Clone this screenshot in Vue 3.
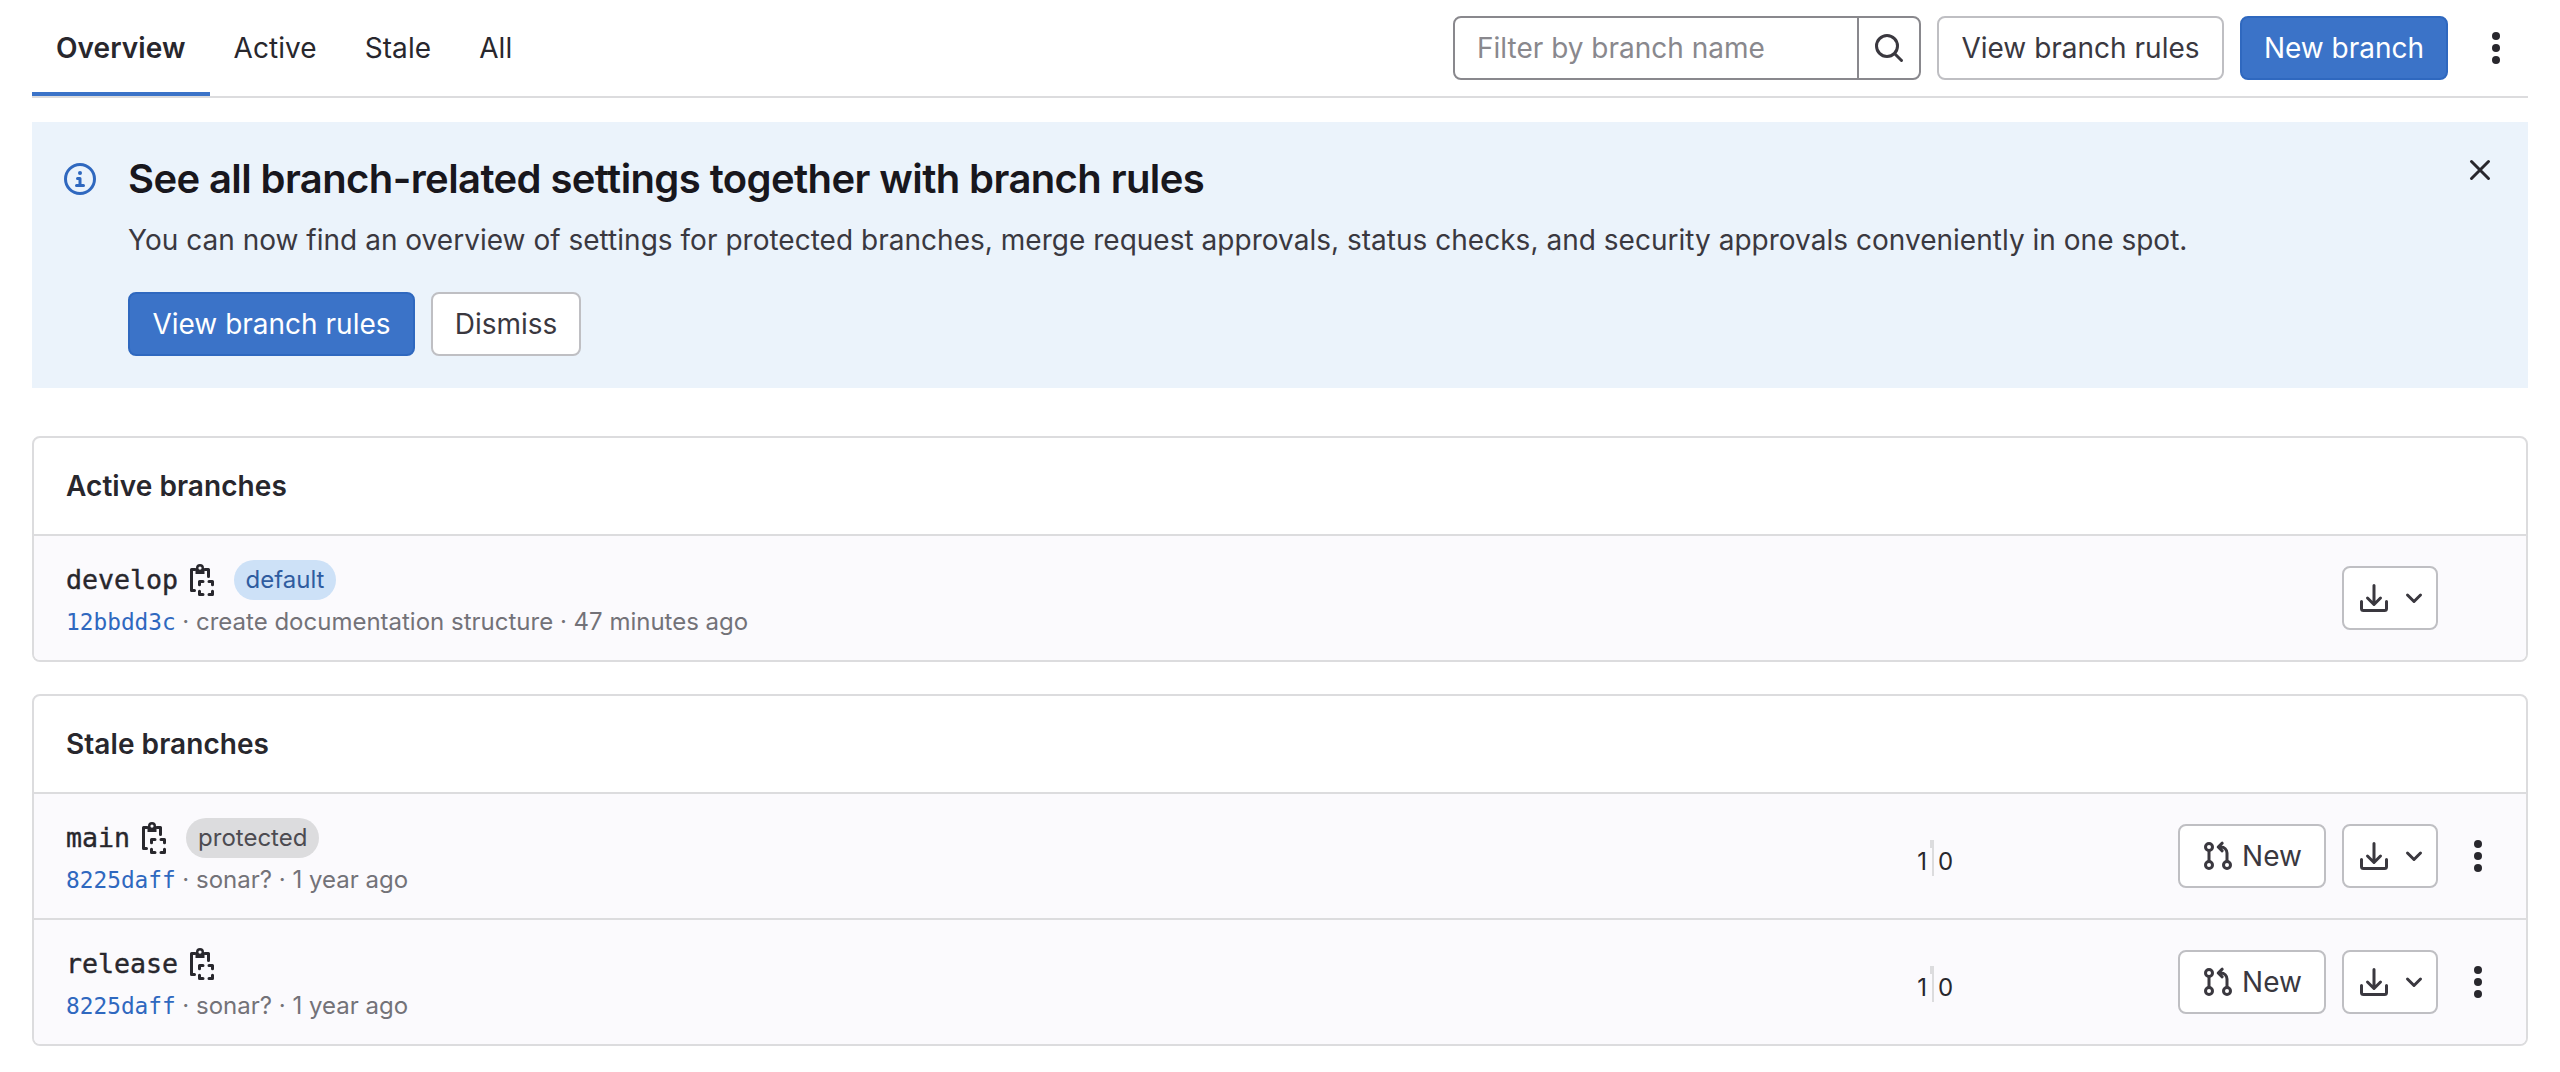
<script setup>
const tabs = ['Overview', 'Active', 'Stale', 'All']
const sections = [
  {
    title: 'Active branches',
    branches: [
      { name: 'develop', badge: 'default', kind: 'info', sha: '12bbdd3c', message: 'create documentation structure', time: '47 minutes ago', own: true }
    ]
  },
  {
    title: 'Stale branches',
    branches: [
      { name: 'main', badge: 'protected', kind: 'muted', sha: '8225daff', message: 'sonar?', time: '1 year ago', behind: 1, ahead: 0 },
      { name: 'release', sha: '8225daff', message: 'sonar?', time: '1 year ago', behind: 1, ahead: 0 }
    ]
  }
]
</script>

<template>
  <main class="page">
    <header class="toolbar">
      <nav class="tabs">
        <a v-for="(tab, i) in tabs" :key="tab" class="tab" :class="{ active: i === 0 }"><span>{{ tab }}</span></a>
      </nav>
      <div class="controls">
        <div class="search">
          <div class="search-text"><span>Filter by branch name</span></div>
          <div class="search-button">
            <svg class="icon" viewBox="0 0 16 16"><circle cx="7" cy="7" r="5.25" /><path d="M11 11l3.25 3.25" /></svg>
          </div>
        </div>
        <button class="btn rules">View branch rules</button>
        <button class="btn primary new-branch">New branch</button>
        <svg class="icon dots" viewBox="0 0 16 16"><circle cx="8" cy="2" r="2" /><circle cx="8" cy="8" r="2" /><circle cx="8" cy="14" r="2" /></svg>
      </div>
    </header>

    <section class="banner">
      <svg class="icon info-icon" viewBox="0 0 16 16"><circle cx="8" cy="8" r="7.25" /><path d="M6.75 7.75H8V11.25M6.25 11.25H9.75" /><circle class="fill" cx="8" cy="5" r="1" /></svg>
      <div class="banner-body">
        <h2>See all branch-related settings together with branch rules</h2>
        <p>You can now find an overview of settings for protected branches, merge request approvals, status checks, and security approvals conveniently in one spot.</p>
        <div class="banner-actions">
          <button class="btn primary rules">View branch rules</button>
          <button class="btn dismiss">Dismiss</button>
        </div>
      </div>
      <svg class="icon close" viewBox="0 0 16 16"><path d="M3.75 3.75l8.5 8.5M12.25 3.75l-8.5 8.5" /></svg>
    </section>

    <section v-for="section in sections" :key="section.title" class="card">
      <h3>{{ section.title }}</h3>
      <div v-for="b in section.branches" :key="b.name" class="row">
        <div class="details">
          <div class="name-line">
            <span class="name">{{ b.name }}</span>
            <svg class="icon copy" viewBox="0 0 16 16">
              <path d="M4.5 2.75H2.75v10.5H4.25M9.5 2.75h1.75V6.25" />
              <path class="fill" fill-rule="evenodd" d="M4.75 2H5a2 2 0 0 1 4 0h.25v3h-4.5zM7 1.25a.8.8 0 1 0 0 1.6.8.8 0 0 0 0-1.6z" />
              <path d="M6.75 10.4V8.75H8.5M11.5 8.75h1.75v1.65M13.25 13.6v1.65H11.5M8.5 15.25H6.75V13.6" />
            </svg>
            <span v-if="b.badge" class="badge" :class="b.kind">{{ b.badge }}</span>
          </div>
          <div class="commit"><span class="sha">{{ b.sha }}</span><span class="message">· {{ b.message }} · {{ b.time }}</span></div>
        </div>
        <div v-if="!b.own" class="divergence"><span class="behind">{{ b.behind }}</span><span class="bar"></span><span class="ahead">{{ b.ahead }}</span></div>
        <div class="actions">
          <button v-if="!b.own" class="btn new-mr">
            <svg class="icon" viewBox="0 0 16 16"><circle cx="3.5" cy="3.5" r="1.75" /><circle cx="3.5" cy="12.5" r="1.75" /><circle cx="12.5" cy="12.5" r="1.75" /><path d="M3.5 5.25v5.5M12.5 10.75V6.5a3 3 0 0 0-3-3H8.5M10.1 1.6L8.1 3.5 10.1 5.4" /></svg>
            <span>New</span>
          </button>
          <button class="btn download">
            <svg class="icon" viewBox="0 0 16 16"><path d="M8 1.75v9M4.75 8L8 11.25 11.25 8M1.75 9.75v3.5a1 1 0 0 0 1 1h10.5a1 1 0 0 0 1-1v-3.5" /></svg>
            <svg class="icon chevron" viewBox="0 0 16 16"><path d="M4.75 6.5L8 9.75 11.25 6.5" /></svg>
          </button>
          <div class="more">
            <svg v-if="!b.own" class="icon dots" viewBox="0 0 16 16"><circle cx="8" cy="2" r="2" /><circle cx="8" cy="8" r="2" /><circle cx="8" cy="14" r="2" /></svg>
          </div>
        </div>
      </div>
    </section>
  </main>
</template>

<style>
body { margin: 0; background: #fff; }
</style>

<style scoped>
* { box-sizing: border-box; }
.page { width: 2560px; height: 1072px; padding: 0 32px; background: #fff; color: #28272d; font: 400 28px/40px Inter, "Liberation Sans", sans-serif; }
h2, h3, p { margin: 0; }
.icon { display: block; flex: none; width: 32px; height: 32px; fill: none; stroke: currentColor; stroke-width: 1.5; stroke-linecap: round; stroke-linejoin: round; }
.icon .fill, .dots { fill: currentColor; stroke: none; }
.toolbar { display: flex; justify-content: space-between; height: 98px; border-bottom: 2px solid #dcdcde; }
.tabs { display: flex; height: 96px; }
.tab { display: flex; padding: 28px 24px 0; letter-spacing: 0.07px; white-space: nowrap; }
.tab.active { font-weight: 600; border-bottom: 4px solid #3b73c8; }
.controls { display: flex; align-items: center; height: 64px; margin-top: 16px; }
.search { display: flex; width: 468px; height: 64px; margin-right: 16px; border: 2px solid #89888d; border-radius: 8px; }
.search-text { width: 402px; padding: 10px 22px; color: #89888d; }
.search-button { display: flex; flex: 1; align-items: center; padding-left: 14px; border-left: 2px solid #89888d; color: #3a383f; }
.btn { display: flex; align-items: center; justify-content: center; height: 64px; padding: 0; border: 2px solid #bfbfc3; border-radius: 8px; background: #fff; color: #3a383f; font: inherit; white-space: nowrap; }
.btn.primary { border-color: #2f68bf; background: #3b73c8; color: #fff; }
.rules { width: 287px; }
.new-branch { width: 208px; margin-left: 16px; }
.controls > .dots { margin: 0 16px 0 32px; }
.banner { display: flex; height: 266px; margin-top: 24px; padding: 32px; background: #ebf3fb; }
.info-icon { margin: 9px 32px 0 0; color: #2f68bf; }
.banner-body { flex: 1; }
h2 { margin-top: 1px; color: #18171d; font-size: 40px; font-weight: 600; line-height: 48px; letter-spacing: -0.6px; white-space: nowrap; }
p { margin-top: 17px; color: #3a383f; letter-spacing: 0.02px; white-space: nowrap; }
.banner-actions { display: flex; gap: 16px; margin-top: 32px; }
.dismiss { width: 150px; }
.close { margin: 0; }
.card { margin-top: 32px; overflow: hidden; border: 2px solid #dcdcde; border-radius: 8px; }
.banner + .card { margin-top: 48px; }
h3 { height: 96px; padding: 28px 32px; font-size: 28px; font-weight: 600; line-height: 40px; letter-spacing: 0.06px; }
.row { display: flex; height: 126px; border-top: 2px solid #dcdcde; background: #fbfafd; }
.details { flex: 1; padding: 24px 0 0 32px; }
.name-line { display: flex; align-items: center; height: 40px; }
.name { font: 26.6px/40px "DejaVu Sans Mono", monospace; -webkit-text-stroke: 0.4px currentColor; }
.copy { margin-left: 8px; }
.badge { height: 40px; margin-left: 16px; padding: 0 12px; border-radius: 20px; font-size: 24px; line-height: 39px; }
.info { padding: 0 11.5px; background: #cde1f7; color: #2f5ca0; }
.muted { background: #dcdcde; color: #4c4b51; }
.commit { display: flex; height: 40px; margin-top: 2px; font-size: 24px; line-height: 40px; color: #737278; white-space: nowrap; }
.sha { font: 22.8px/40px "DejaVu Sans Mono", monospace; color: #2f68bf; }
.message { margin-left: 6.5px; }
.divergence { display: flex; width: 265px; padding-top: 46px; font-size: 24px; line-height: 44px; }
.behind { width: 14px; text-align: right; }
.bar { width: 4px; height: 36px; margin: 0 4px 0 3px; background: linear-gradient(#dcdcde, #dcdcde) 0 0 / 4px 8px no-repeat, linear-gradient(#dcdcde, #dcdcde) 2px 8px / 2px 28px no-repeat; }
.actions { display: flex; gap: 16px; padding-top: 30px; }
.new-mr { width: 148px; gap: 8px; }
.download { width: 96px; gap: 8px; justify-content: flex-start; padding-left: 14px; }
.more { display: flex; align-items: center; width: 72px; height: 64px; padding-left: 8px; }
</style>
